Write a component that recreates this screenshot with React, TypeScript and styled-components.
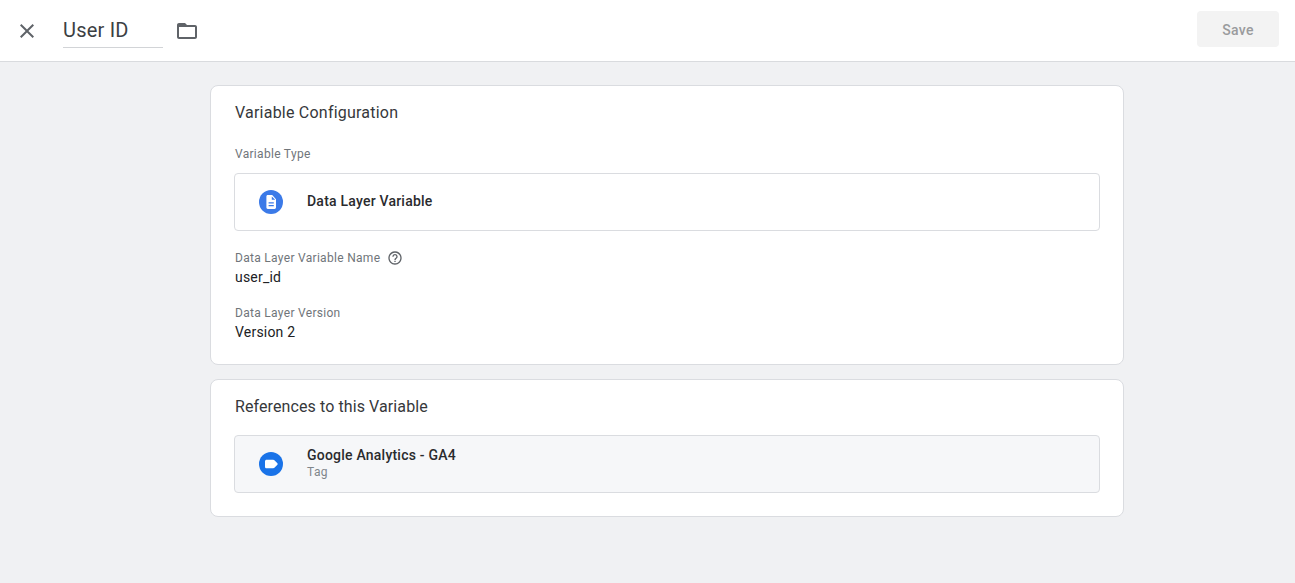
import React from "react";
import styled, { createGlobalStyle } from "styled-components";

const Global = createGlobalStyle`
  html, body { margin: 0; padding: 0; height: 100%; background: #f0f1f3; }
  body { font-family: Roboto, "Liberation Sans", sans-serif; color: #202124; overflow: hidden; }
`;

const Page = styled.div`
  display: flex;
  flex-direction: column;
  height: 583px;
  background: #f0f1f3;
`;

const Header = styled.header`
  display: flex;
  align-items: center;
  height: 61px;
  box-sizing: content-box;
  padding: 0 16px 0 15px;
  background: #fff;
  border-bottom: 1px solid #d9dbde;
`;

const CloseButton = styled.span`
  display: flex;
  width: 24px;
  height: 24px;
  color: #5f6368;
`;

const NameField = styled.div`
  width: 100px;
  height: 37px;
  margin: 0 12px 2px 24px;
  padding-top: 1px;
  box-sizing: border-box;
  border-bottom: 1px solid #d2d4d7;
  font-size: 20px;
  line-height: 37px;
  letter-spacing: 0.2px;
  color: #3c4043;
`;

const FolderIcon = styled.span`
  display: flex;
  width: 24px;
  height: 24px;
  color: #5f6368;
`;

const Spacer = styled.div`
  flex: 1;
`;

const SaveButton = styled.button`
  width: 82px;
  height: 36px;
  margin-bottom: 3px;
  padding: 2px 0 0;
  border: 0;
  border-radius: 4px;
  background: #f3f3f3;
  color: #9a9b9d;
  font-family: inherit;
  font-size: 14px;
  font-weight: 500;
  letter-spacing: 0.25px;
`;

const Main = styled.main`
  display: flex;
  flex-direction: column;
  gap: 14px;
  width: 914px;
  margin: 23px 0 0 210px;
`;

const Card = styled.section<{ $bottom: number }>`
  box-sizing: border-box;
  padding: 15px 23px ${(p) => p.$bottom}px 24px;
  background: #fff;
  border: 1px solid #dadce0;
  border-radius: 8px;
`;

const CardTitle = styled.h2<{ $tracking: number }>`
  margin: 0;
  font-size: 16px;
  font-weight: 400;
  line-height: 24px;
  color: #36383b;
  letter-spacing: ${(p) => p.$tracking}px;
`;

const Label = styled.div<{ $top: number }>`
  display: flex;
  align-items: center;
  gap: 7px;
  margin-top: ${(p) => p.$top}px;
  font-size: 12px;
  line-height: 16px;
  letter-spacing: 0.3px;
  color: #70757a;
`;

const Value = styled.div`
  font-size: 14px;
  line-height: 20px;
  margin-top: 1px;
  letter-spacing: 0.2px;
  color: #202124;
`;

const Row = styled.div<{ $muted?: boolean; $top: number }>`
  display: flex;
  align-items: center;
  box-sizing: border-box;
  height: 58px;
  margin-top: ${(p) => p.$top}px;
  margin-left: -1px;
  padding-left: 24px;
  background: ${(p) => (p.$muted ? "#f6f7f9" : "#fff")};
  border: 1px solid #dadce0;
  border-radius: 4px;
`;

const RowIcon = styled.span`
  display: flex;
  flex: none;
  width: 24px;
  height: 24px;
  margin-right: 24px;
`;

const RowText = styled.div`
  display: flex;
  flex-direction: column;
  padding-bottom: 2px;
`;

const RowTitle = styled.div`
  font-size: 14px;
  font-weight: 500;
  line-height: 18px;
  letter-spacing: 0.22px;
  color: #2a2b2e;
`;

const RowSub = styled.div`
  margin-top: 1px;
  font-size: 12px;
  line-height: 15px;
  letter-spacing: 0.4px;
  color: #80868b;
`;

const HelpIcon = styled.span`
  display: flex;
  width: 16px;
  height: 16px;
  color: #5f6368;
`;

export default function App() {
  return (
    <Page>
      <Global />
      <Header>
        <CloseButton>
          <svg viewBox="0 0 24 24" width="24" height="24" fill="currentColor">
            <path d="M19 6.41 17.59 5 12 10.59 6.41 5 5 6.41 10.59 12 5 17.59 6.41 19 12 13.41 17.59 19 19 17.59 13.41 12z" />
          </svg>
        </CloseButton>
        <NameField>User ID</NameField>
        <FolderIcon>
          <svg viewBox="0 0 24 24" width="24" height="24" fill="currentColor">
            <path d="M20 6h-8l-2-2H4c-1.1 0-2 .9-2 2v12c0 1.1.9 2 2 2h16c1.1 0 2-.9 2-2V8c0-1.1-.9-2-2-2zm0 12H4V8h16v10z" />
          </svg>
        </FolderIcon>
        <Spacer />
        <SaveButton>Save</SaveButton>
      </Header>
      <Main>
        <Card $bottom={22}>
          <CardTitle $tracking={0.22}>Variable Configuration</CardTitle>
          <Label $top={21}>Variable Type</Label>
          <Row $top={11}>
            <RowIcon>
              <svg viewBox="0 0 24 24" width="24" height="24">
                <circle cx="12" cy="12" r="12" fill="#3b7ae8" />
                <path
                  fill="#fff"
                  fillRule="evenodd"
                  d="M13.2 5H8.8C8 5 7.4 5.6 7.4 6.4v11.2c0 .8.6 1.4 1.4 1.4h6.8c.8 0 1.4-.6 1.4-1.4V9.2L13.2 5zm1.6 11.2H9.6V15h5.2v1.2zm0-2.7H9.6v-1.2h5.2v1.2zM12.8 9.8V6.4l3.4 3.4h-3.4z"
                />
              </svg>
            </RowIcon>
            <RowText>
              <RowTitle>Data Layer Variable</RowTitle>
            </RowText>
          </Row>
          <Label $top={19}>
            Data Layer Variable Name
            <HelpIcon>
              <svg viewBox="0 0 24 24" width="16" height="16" fill="currentColor">
                <path d="M11 18h2v-2h-2v2zm1-16C6.48 2 2 6.48 2 12s4.48 10 10 10 10-4.48 10-10S17.52 2 12 2zm0 18c-4.41 0-8-3.59-8-8s3.59-8 8-8 8 3.59 8 8-3.59 8-8 8zm0-14c-2.21 0-4 1.79-4 4h2c0-1.1.9-2 2-2s2 .9 2 2c0 2-3 1.75-3 5h2c0-2.25 3-2.5 3-5 0-2.21-1.79-4-4-4z" />
              </svg>
            </HelpIcon>
          </Label>
          <Value>user_id</Value>
          <Label $top={18}>Data Layer Version</Label>
          <Value>Version 2</Value>
        </Card>
        <Card $bottom={23}>
          <CardTitle $tracking={0.1}>References to this Variable</CardTitle>
          <Row $muted $top={16}>
            <RowIcon>
              <svg viewBox="0 0 24 24" width="24" height="24">
                <circle cx="12" cy="12" r="12" fill="#1a73e8" />
                <path
                  fill="#fff"
                  d="M7.6 7.7h6.6c.5 0 .9.2 1.2.5l3 3.1c.4.4.4 1 0 1.4l-3 3.1c-.3.3-.7.5-1.2.5H7.6c-.9 0-1.6-.7-1.6-1.6V9.3c0-.9.7-1.6 1.6-1.6z"
                />
              </svg>
            </RowIcon>
            <RowText>
              <RowTitle>Google Analytics - GA4</RowTitle>
              <RowSub>Tag</RowSub>
            </RowText>
          </Row>
        </Card>
      </Main>
    </Page>
  );
}
